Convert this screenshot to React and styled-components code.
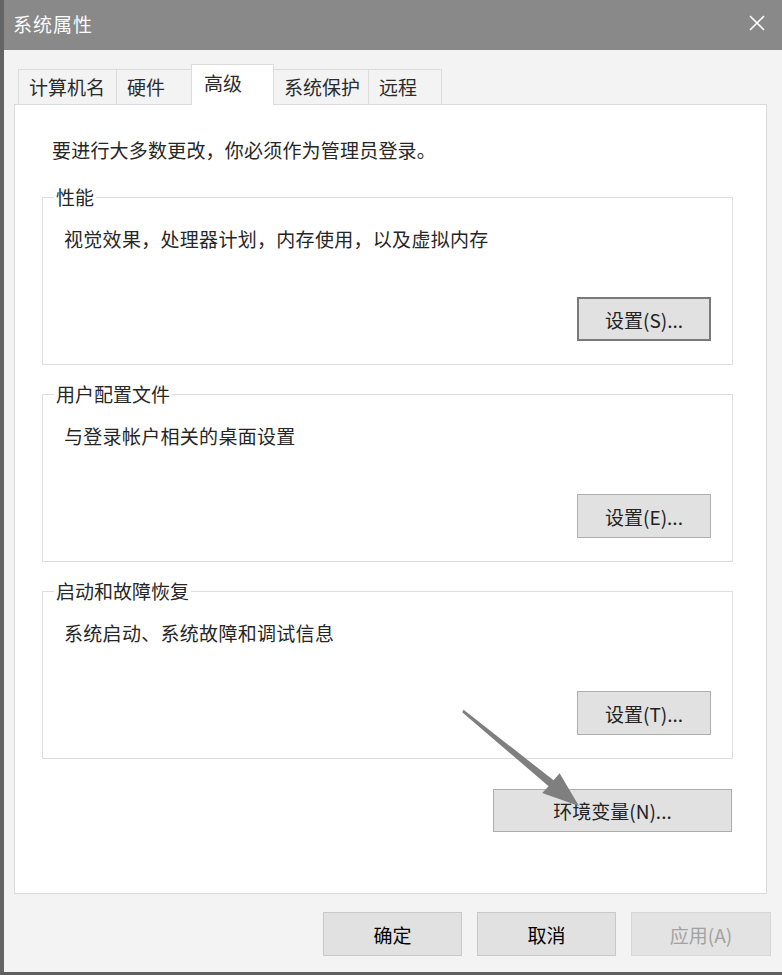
import React from "react"
import styled, { createGlobalStyle, css } from "styled-components"

const GlobalStyle = createGlobalStyle`
  html, body {
    margin: 0;
    padding: 0;
    background: #f3f3f3;
  }
  * {
    box-sizing: border-box;
  }
`

const tabs = [
  { label: "计算机名", width: 99 },
  { label: "硬件", width: 76 },
  { label: "高级", width: 83, active: true },
  { label: "系统保护", width: 96 },
  { label: "远程", width: 74 },
]

const groups = [
  {
    title: "性能",
    text: "视觉效果，处理器计划，内存使用，以及虚拟内存",
    button: "设置(S)...",
    focused: true,
  },
  {
    title: "用户配置文件",
    text: "与登录帐户相关的桌面设置",
    button: "设置(E)...",
  },
  {
    title: "启动和故障恢复",
    text: "系统启动、系统故障和调试信息",
    button: "设置(T)...",
  },
]

const Arrow = () => (
  <ArrowLayer width="782" height="975" viewBox="0 0 782 975">
    <polygon
      points="463.6,709.8 553.6,780.3 559.6,773.2 579,806 542.2,793 548.6,786.2 462.2,712.2"
      fill="#7f7f7f"
    />
  </ArrowLayer>
)

const CloseIcon = () => (
  <svg width="18" height="18" viewBox="0 0 18 18">
    <path d="M2 2 L16 16 M16 2 L2 16" stroke="#fff" strokeWidth="1.6" />
  </svg>
)

const App = () => (
  <>
    <GlobalStyle />
    <Window>
      <TitleBar>
        <Title>系统属性</Title>
        <CloseIcon />
      </TitleBar>

      <Body>
        <TabRow>
          {tabs.map(tab => (
            <Tab key={tab.label} $active={tab.active} $width={tab.width}>
              {tab.label}
            </Tab>
          ))}
        </TabRow>

        <Panel>
          <Intro>要进行大多数更改，你必须作为管理员登录。</Intro>
          {groups.map(group => (
            <Group key={group.title}>
              <Legend>{group.title}</Legend>
              <GroupBody>
                <Description>{group.text}</Description>
                <Button $focused={group.focused}>{group.button}</Button>
              </GroupBody>
            </Group>
          ))}
          <EnvRow>
            <Button $wide>环境变量(N)...</Button>
          </EnvRow>
        </Panel>

        <Footer>
          <Button $footer $dark>确定</Button>
          <Button $footer $dark>取消</Button>
          <Button $footer $disabled>应用(A)</Button>
        </Footer>
      </Body>

      <Arrow />
    </Window>
  </>
)

const Window = styled.div`
  position: relative;
  display: flex;
  flex-direction: column;
  width: 782px;
  height: 975px;
  border-left: 4px solid #646464;
  border-bottom: 3px solid #5f5f5f;
  background: #f3f3f3;
  font-family: "Microsoft YaHei", "Noto Sans CJK SC", "Noto Sans", sans-serif;
  color: #262626;
  overflow: hidden;
`

const TitleBar = styled.div`
  display: flex;
  align-items: center;
  justify-content: space-between;
  height: 50px;
  padding: 0 16px 4px 9px;
  background: #898989;
  flex-shrink: 0;
`

const Title = styled.div`
  color: #fbfbfb;
  font-size: 19px;
  letter-spacing: 1px;
`

const Body = styled.div`
  flex: 1;
  display: flex;
  flex-direction: column;
  padding: 14px 11px 0 10px;
`

const TabRow = styled.div`
  display: flex;
  align-items: flex-end;
  height: 40px;
  padding-left: 4px;
  position: relative;
  z-index: 1;
`

const Tab = styled.div`
  width: ${p => p.$width}px;
  height: 35px;
  display: flex;
  align-items: center;
  padding: 0 0 2px 10px;
  font-size: 19px;
  color: #2b2b2b;
  background: #f3f3f3;
  border: 1px solid #dcdcdc;
  border-bottom: none;
  margin-right: -1px;

  ${p =>
    p.$active &&
    css`
      height: 41px;
      margin-bottom: -1px;
      padding: 0 0 6px 12px;
      background: #fff;
      position: relative;
      z-index: 2;
    `}
`

const Panel = styled.div`
  height: 790px;
  margin-right: 4px;
  padding: 32px 33px 0 27px;
  background: #fff;
  border: 1px solid #dadada;
  display: flex;
  flex-direction: column;
`

const Intro = styled.div`
  margin-left: 10px;
  font-size: 19px;
  line-height: 26px;
  letter-spacing: 0.2px;
  margin-bottom: 21px;
`

const Group = styled.fieldset`
  margin: 0 0 16px 0;
  padding: 0;
  min-width: 0;
  border: 1px solid #dedede;
`

const Legend = styled.legend`
  margin-left: 11px;
  padding: 0 2px;
  font-size: 19px;
  line-height: 26px;
`

const GroupBody = styled.div`
  display: flex;
  flex-direction: column;
  padding: 16px 21px 23px 21px;
`

const Description = styled.div`
  font-size: 19px;
  line-height: 26px;
  letter-spacing: 0.3px;
  margin-bottom: 45px;
`

const Button = styled.div`
  align-self: flex-end;
  display: flex;
  align-items: center;
  justify-content: center;
  width: 134px;
  height: 44px;
  background: #e1e1e1;
  border: 1px solid #adadad;
  font-size: 19px;
  color: #222;

  ${p =>
    p.$focused &&
    css`
      border: 2px solid #7a7a7a;
    `}

  ${p =>
    p.$wide &&
    css`
      width: 239px;
      height: 43px;
    `}

  ${p =>
    p.$footer &&
    css`
      width: 139px;
      height: 44px;
      border-color: #c8c8c8;
    `}

  ${p =>
    p.$dark &&
    css`
      color: #000;
    `}

  ${p =>
    p.$disabled &&
    css`
      width: 140px;
      background: #e3e3e3;
      border-color: #d6d6d6;
      color: #a2a2a2;
    `}
`

const EnvRow = styled.div`
  display: flex;
  justify-content: flex-end;
  margin-top: 14px;
  padding-right: 1px;
`

const Footer = styled.div`
  display: flex;
  justify-content: flex-end;
  gap: 15px;
  margin-top: 18px;
`

const ArrowLayer = styled.svg`
  position: absolute;
  left: -4px;
  top: 0;
  pointer-events: none;
  z-index: 5;
`

export default App
